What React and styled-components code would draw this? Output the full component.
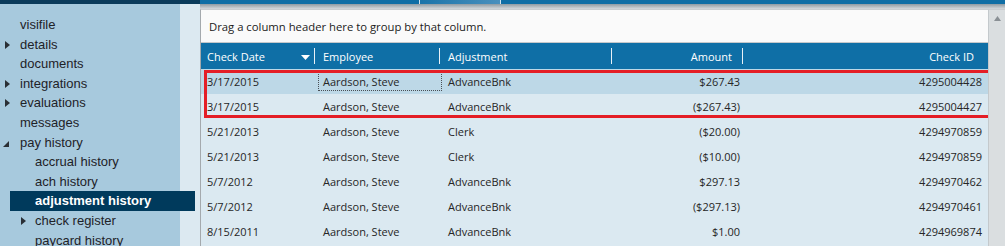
import React from "react";
import styled, { createGlobalStyle, css } from "styled-components";

const Global = createGlobalStyle`
  html, body { margin: 0; padding: 0; }
  body { width: 1005px; height: 246px; overflow: hidden; background: #dce9f1; }
`;

const Page = styled.div`
  width: 1005px;
  height: 246px;
  display: flex;
  flex-direction: column;
  overflow: hidden;
`;

const TopBar = styled.div`
  height: 4px;
  display: flex;
  flex: none;
`;

const NavyBlock = styled.div`
  width: 200px;
  background: #0b3b5b;
`;

const TabStrip = styled.div`
  flex: 1;
  display: flex;
  background: #0f6ea5;
`;

const TabSeg = styled.div`
  width: ${(p) => p.$w}px;
  flex: ${(p) => (p.$w ? "none" : "1")};
  background: ${(p) => (p.$light ? "linear-gradient(90deg, #1a74a9, #4a90bd)" : "#0f6ea5")};
  border-right: ${(p) => (p.$edge ? "1px solid #cfe2ee" : "none")};
`;

const Body = styled.div`
  flex: 1;
  display: flex;
  min-height: 0;
`;

const Sidebar = styled.nav`
  width: 200px;
  flex: none;
  background: linear-gradient(90deg, #a7c9dd 0, #a7c9dd 180px, #dce9f1 180px);
  padding-top: 11px;
  box-sizing: border-box;
  font-family: "Liberation Sans", Arial, sans-serif;
  font-size: 13px;
  color: #1e2228;
`;

const NavItem = styled.div`
  position: relative;
  height: 19.6px;
  line-height: 19.6px;
  padding-left: ${(p) => (p.$level ? 35 : 20)}px;
  ${(p) =>
    p.$active &&
    css`
      margin-left: 10px;
      width: 185px;
      padding-left: 25px;
      background: #003a5c;
      color: #ffffff;
      font-weight: bold;
      box-sizing: border-box;
    `}
`;

const Caret = styled.svg`
  position: absolute;
  left: ${(p) => p.$left}px;
  top: 6px;
`;

const Main = styled.div`
  flex: 1;
  display: flex;
  padding-top: 5px;
  background: linear-gradient(180deg, #8f9aa2 0, #d4d9dc 5px, #dce9f1 5px);
`;

const GridPanel = styled.div`
  width: 788px;
  flex: none;
  display: flex;
  flex-direction: column;
  border-left: 1px solid #a4a9ad;
  border-top: 1px solid #c9cdd0;
  box-sizing: border-box;
  font-family: "Open Sans", "Noto Sans", sans-serif;
  font-size: 11px;
  background: #dbe9f1;
`;

const GroupPanel = styled.div`
  height: 32px;
  display: flex;
  align-items: center;
  padding-left: 8px;
  background: #fafafa;
  color: #1a1a1a;
  border-bottom: 1px solid #c4c8cb;
  font-size: 11.3px;
`;

const cols = "113px 125px 172px 131px 1fr";

const HeaderRow = styled.div`
  height: 26px;
  display: grid;
  grid-template-columns: ${cols};
  background: #0f6fa6;
  color: #ffffff;
`;

const HeadCell = styled.div`
  position: relative;
  display: flex;
  align-items: center;
  justify-content: ${(p) => (p.$right ? "flex-end" : "flex-start")};
  padding-left: ${(p) => p.$pl ?? 9}px;
  padding-right: ${(p) => p.$pr ?? 0}px;
  ${(p) =>
    p.$sep &&
    css`
      &::before {
        content: "";
        position: absolute;
        left: 0;
        top: 5px;
        bottom: 5px;
        width: 1px;
        background: #e8f1f7;
      }
    `}
`;

const SortArrow = styled.svg`
  position: absolute;
  right: 4px;
  top: 12px;
`;

const Rows = styled.div`
  position: relative;
  flex: 1;
`;

const Row = styled.div`
  height: 25px;
  display: grid;
  grid-template-columns: ${cols};
  background: ${(p) => (p.$selected ? "#bdd8e7" : "#dbe9f1")};
  color: #262626;
`;

const Cell = styled.div`
  display: flex;
  align-items: center;
  justify-content: ${(p) => (p.$right ? "flex-end" : "flex-start")};
  padding-left: ${(p) => p.$pl ?? 9}px;
  padding-right: ${(p) => p.$pr ?? 0}px;
  white-space: nowrap;
  ${(p) =>
    p.$focus &&
    css`
      margin: 3px 0 3px 4px;
      width: 124px;
      padding-left: 4px;
      border: 1px dotted #4a4f55;
      box-sizing: border-box;
    `}
`;

const Highlight = styled.div`
  position: absolute;
  left: 3px;
  top: 1px;
  width: 787px;
  height: 48px;
  border: 3px solid #e41e26;
  box-sizing: border-box;
  pointer-events: none;
`;

const Scrollbar = styled.div`
  flex: 1;
  position: relative;
  background: #dadee0;
  border-top: 1px solid #c9cdd0;
  border-left: 1px solid #c4c9cc;
`;

const ScrollUp = styled.svg`
  position: absolute;
  left: 5px;
  top: 6px;
`;

const nav = [
  { label: "visifile" },
  { label: "details", caret: "right" },
  { label: "documents" },
  { label: "integrations", caret: "right" },
  { label: "evaluations", caret: "right" },
  { label: "messages" },
  { label: "pay history", caret: "down" },
  { label: "accrual history", level: 1 },
  { label: "ach history", level: 1 },
  { label: "adjustment history", level: 1, active: true },
  { label: "check register", level: 1, caret: "right" },
  { label: "paycard history", level: 1 },
];

const data = [
  ["3/17/2015", "Aardson, Steve", "AdvanceBnk", "$267.43", "4295004428"],
  ["3/17/2015", "Aardson, Steve", "AdvanceBnk", "($267.43)", "4295004427"],
  ["5/21/2013", "Aardson, Steve", "Clerk", "($20.00)", "4294970859"],
  ["5/21/2013", "Aardson, Steve", "Clerk", "($10.00)", "4294970859"],
  ["5/7/2012", "Aardson, Steve", "AdvanceBnk", "$297.13", "4294970462"],
  ["5/7/2012", "Aardson, Steve", "AdvanceBnk", "($297.13)", "4294970461"],
  ["8/15/2011", "Aardson, Steve", "AdvanceBnk", "$1.00", "4294969874"],
];

function NavCaret({ kind, level }) {
  if (kind === "down") {
    return (
      <Caret $left={3} width="6" height="6" viewBox="0 0 6 6" style={{ top: 8 }}>
        <path d="M6 0 L6 6 L0 6 Z" fill="#2a2f35" />
      </Caret>
    );
  }
  return (
    <Caret $left={level ? 21 : 5} width="5" height="8" viewBox="0 0 5 8">
      <path d="M0 0 L5 4 L0 8 Z" fill="#2a2f35" />
    </Caret>
  );
}

export default function App() {
  return (
    <Page>
      <Global />
      <TopBar>
        <NavyBlock />
        <TabStrip>
          <TabSeg $w={219} $edge />
          <TabSeg $w={80} $light $edge />
          <TabSeg />
        </TabStrip>
      </TopBar>
      <Body>
        <Sidebar>
          {nav.map((n) => (
            <NavItem key={n.label} $level={n.level} $active={n.active}>
              {n.caret && <NavCaret kind={n.caret} level={n.level} />}
              {n.label}
            </NavItem>
          ))}
        </Sidebar>
        <Main>
          <GridPanel>
            <GroupPanel>Drag a column header here to group by that column.</GroupPanel>
            <HeaderRow>
              <HeadCell $pl={6}>
                Check Date
                <SortArrow width="9" height="5" viewBox="0 0 9 5">
                  <path d="M0 0 L9 0 L4.5 5 Z" fill="#ffffff" />
                </SortArrow>
              </HeadCell>
              <HeadCell $sep>Employee</HeadCell>
              <HeadCell $sep>Adjustment</HeadCell>
              <HeadCell $sep $right $pr={10}>Amount</HeadCell>
              <HeadCell $sep $right $pr={14}>Check ID</HeadCell>
            </HeaderRow>
            <Rows>
              {data.map((r, i) => (
                <Row key={i} $selected={i === 0}>
                  <Cell $pl={6}>{r[0]}</Cell>
                  <Cell $focus={i === 0}>{r[1]}</Cell>
                  <Cell>{r[2]}</Cell>
                  <Cell $right $pr={2}>{r[3]}</Cell>
                  <Cell $right $pr={6}>{r[4]}</Cell>
                </Row>
              ))}
              <Highlight />
            </Rows>
          </GridPanel>
          <Scrollbar>
            <ScrollUp width="7" height="5" viewBox="0 0 7 5">
              <path d="M0 5 L3.5 0 L7 5 Z" fill="#8a9095" />
            </ScrollUp>
          </Scrollbar>
        </Main>
      </Body>
    </Page>
  );
}
